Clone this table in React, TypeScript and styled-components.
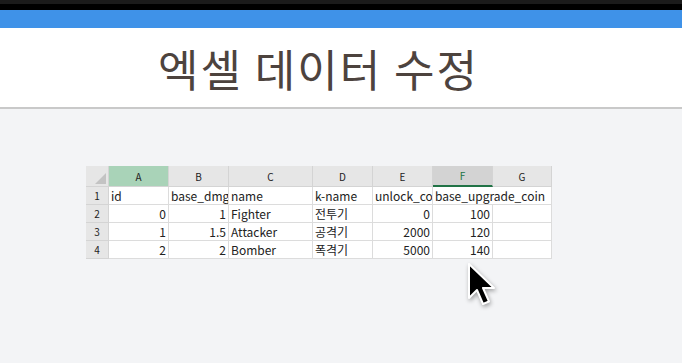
import React from "react";
import styled, { createGlobalStyle } from "styled-components";

const GlobalStyle = createGlobalStyle`
  html, body {
    margin: 0;
    padding: 0;
    background: #f3f4f6;
  }
  body {
    font-family: "Noto Sans CJK KR", "Noto Sans", sans-serif;
  }
`;

const Page = styled.div`
  position: relative;
  width: 682px;
  height: 363px;
  overflow: hidden;
  background: #f3f4f6;
`;

const TopStrip = styled.div`
  height: 4px;
  background: #1b1b1b;
`;

const BlackStrip = styled.div`
  height: 6px;
  background: #000;
`;

const BlueBar = styled.div`
  height: 18px;
  background: #3f92e8;
`;

const TitleBar = styled.div`
  height: 81px;
  box-sizing: border-box;
  background: #fff;
  border-bottom: 2px solid #c9c9c9;
  display: flex;
  align-items: center;
  padding-left: 158px;
`;

const Title = styled.h1`
  margin: 0;
  font-family: "Noto Sans CJK KR", sans-serif;
  font-weight: 400;
  font-size: 44px;
  letter-spacing: 2px;
  color: #4d433e;
`;

const Body = styled.div`
  padding: 57px 0 0 86px;
`;

const Sheet = styled.div`
  display: grid;
  grid-template-columns: 23px 60px 60px 84px 60px 60px 60px 59px;
  grid-template-rows: 21px repeat(4, 18px);
  background: #fff;
  width: max-content;
  font-family: "Noto Sans CJK KR", sans-serif;
`;

const Corner = styled.div`
  background: #e6e6e6;
  border-right: 1px solid #d4d4d4;
  border-bottom: 1px solid #d4d4d4;
  position: relative;
  &::after {
    content: "";
    position: absolute;
    right: 2px;
    bottom: 2px;
    border-left: 11px solid transparent;
    border-bottom: 11px solid #c3c3c3;
  }
`;

const ColHead = styled.div<{ $active?: "sel" | "hl" }>`
  background: ${(p) =>
    p.$active === "sel" ? "#a9d3b8" : p.$active === "hl" ? "#d3d3d3" : "#e6e6e6"};
  border-right: 1px solid #d4d4d4;
  border-bottom: ${(p) => (p.$active === "hl" ? "2px solid #217346" : "1px solid #d4d4d4")};
  display: flex;
  align-items: center;
  justify-content: center;
  font-size: 10px;
  color: ${(p) => (p.$active === "hl" ? "#217346" : "#222")};
  box-sizing: border-box;
`;

const RowHead = styled.div`
  background: #e6e6e6;
  border-right: 1px solid #d4d4d4;
  border-bottom: 1px solid #d4d4d4;
  display: flex;
  align-items: center;
  justify-content: center;
  font-size: 10px;
  color: #222;
`;

const Cell = styled.div<{ $num?: boolean; $span?: number }>`
  grid-column: span ${(p) => p.$span ?? 1};
  border-right: 1px solid #dcdcdc;
  border-bottom: 1px solid #dcdcdc;
  display: flex;
  align-items: center;
  justify-content: ${(p) => (p.$num ? "flex-end" : "flex-start")};
  padding: 0 2px;
  font-size: 12px;
  color: #222;
  white-space: nowrap;
  overflow: hidden;
`;

const Cursor = styled.svg`
  position: absolute;
  left: 466px;
  top: 262px;
  filter: drop-shadow(1px 2px 2px rgba(0, 0, 0, 0.35));
`;

const columns = ["A", "B", "C", "D", "E", "F", "G"];

type CellData = { v: string; num?: boolean; span?: number };

const rows: CellData[][] = [
  [{ v: "id" }, { v: "base_dmg" }, { v: "name" }, { v: "k-name" }, { v: "unlock_co" }, { v: "base_upgrade_coin", span: 2 }],
  [{ v: "0", num: true }, { v: "1", num: true }, { v: "Fighter" }, { v: "전투기" }, { v: "0", num: true }, { v: "100", num: true }, { v: "" }],
  [{ v: "1", num: true }, { v: "1.5", num: true }, { v: "Attacker" }, { v: "공격기" }, { v: "2000", num: true }, { v: "120", num: true }, { v: "" }],
  [{ v: "2", num: true }, { v: "2", num: true }, { v: "Bomber" }, { v: "폭격기" }, { v: "5000", num: true }, { v: "140", num: true }, { v: "" }],
];

const App: React.FC = () => {
  return (
    <Page>
      <GlobalStyle />
      <TopStrip />
      <BlackStrip />
      <BlueBar />
      <TitleBar>
        <Title>엑셀 데이터 수정</Title>
      </TitleBar>
      <Body>
        <Sheet>
          <Corner />
          {columns.map((c) => (
            <ColHead key={c} $active={c === "A" ? "sel" : c === "F" ? "hl" : undefined}>
              {c}
            </ColHead>
          ))}
          {rows.map((r, i) => (
            <React.Fragment key={i}>
              <RowHead>{i + 1}</RowHead>
              {r.map((cell, j) => (
                <Cell key={j} $num={cell.num} $span={cell.span}>
                  {cell.v}
                </Cell>
              ))}
            </React.Fragment>
          ))}
        </Sheet>
      </Body>
      <Cursor width="36" height="48" viewBox="0 0 36 48">
        <path
          d="M3 2 L3 36 L11 28 L17 42 L23 39.5 L17 26 L28 26 Z"
          fill="#000"
          stroke="#fff"
          strokeWidth="2"
          strokeLinejoin="round"
        />
      </Cursor>
    </Page>
  );
};

export default App;
